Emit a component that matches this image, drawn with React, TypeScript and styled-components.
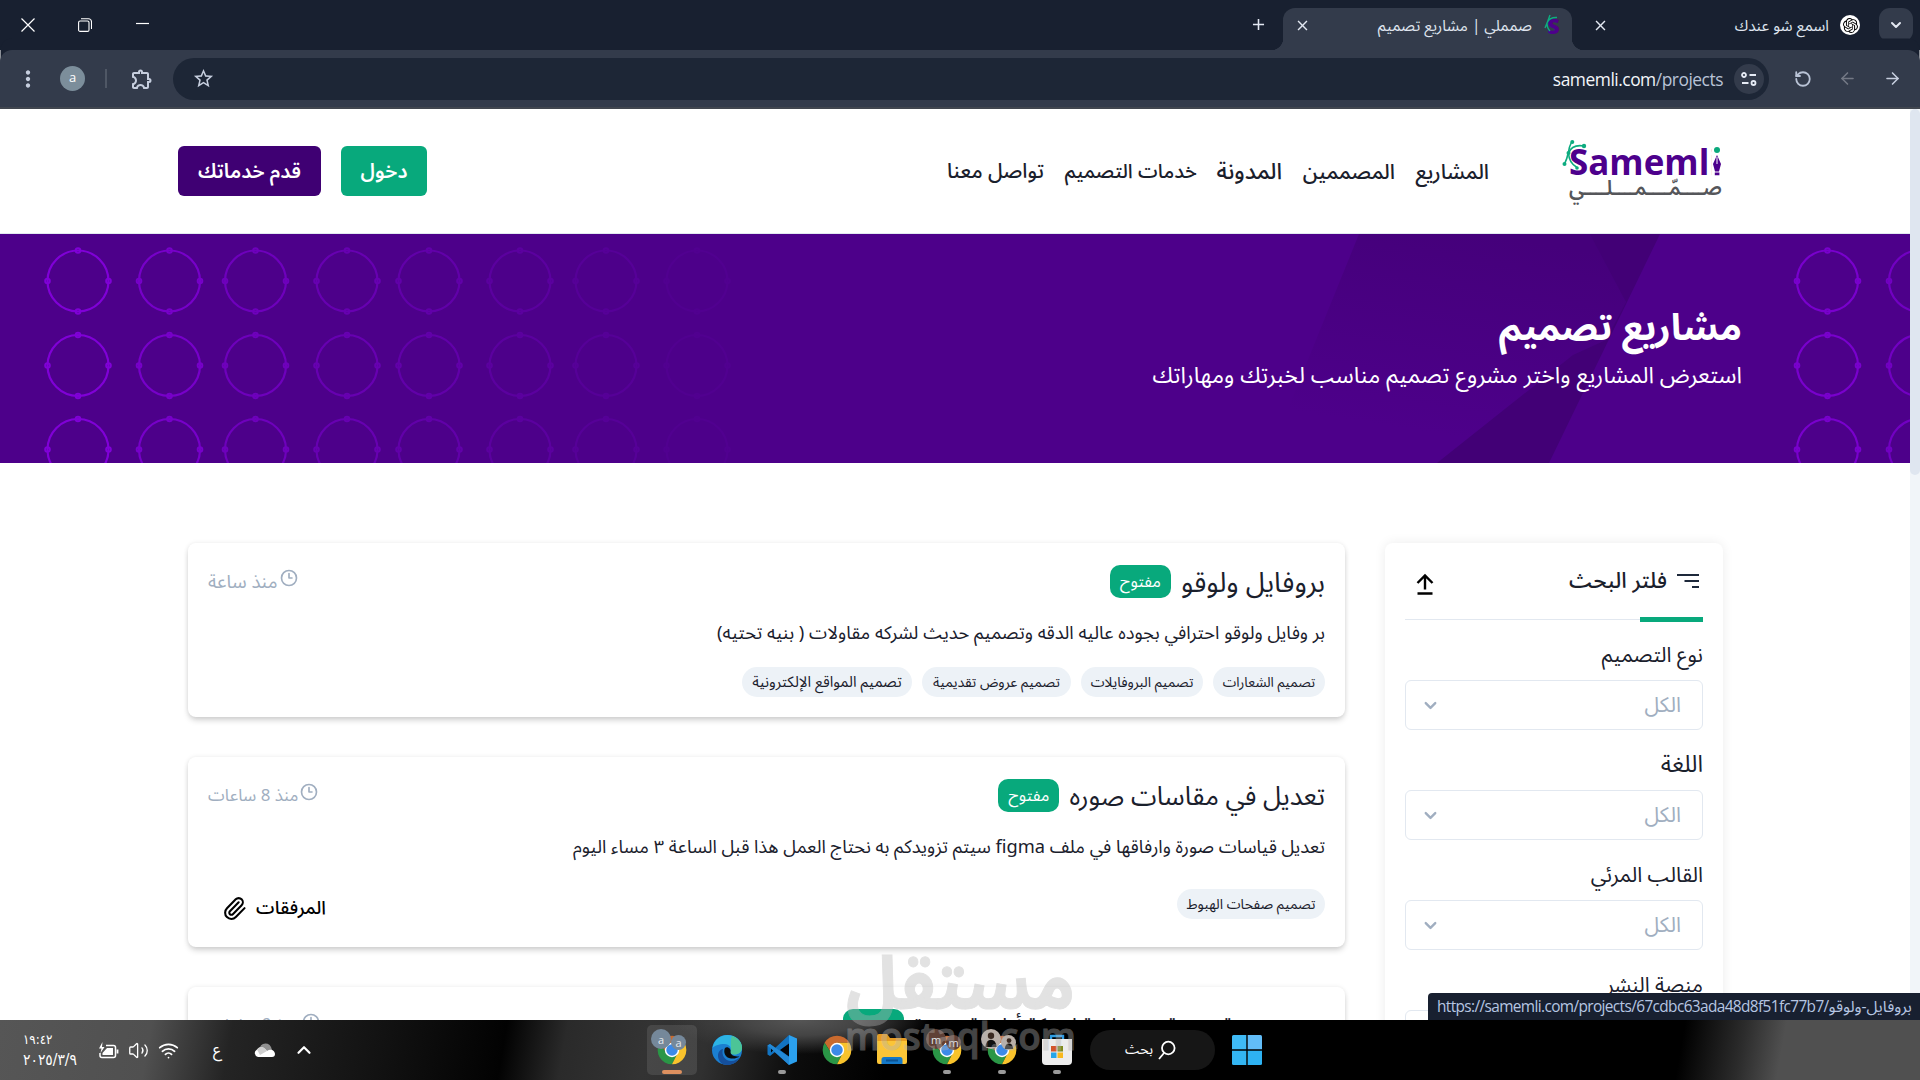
import type { ReactNode } from "react";
import styled, { createGlobalStyle } from "styled-components";
import { ArrowLeft, ArrowRight, ChevronDown, ChevronUp, Clock3, Paperclip, RotateCcw, Volume2, Wifi } from "lucide-react";
import { MdClose, MdAdd, MdOutlineExtension, MdStarBorder, MdMoreVert } from "react-icons/md";
import { SiOpenai } from "react-icons/si";

const filters = [
    { label: "نوع التصميم", size: 20.9 },
    { label: "اللغة", size: 23.4 },
    { label: "القالب المرئي", size: 21 },
    { label: "منصة النشر", size: 20.8 },
];

const navItems = [
    { label: "المشاريع", width: 74, size: 20.9 },
    { label: "المصممين", width: 93, size: 21 },
    { label: "المدونة", width: 65, size: 22.5 },
    { label: "خدمات التصميم", width: 133, size: 19.8 },
    { label: "تواصل معنا", width: 98, size: 20.6 },
];

type Project = {
    title: string;
    titleSize: number;
    time: string;
    timeSize: number;
    description: string;
    tags: { label: string; width: number; size: number }[];
    attachments?: boolean;
};

const projects: Project[] = [
    {
        title: "بروفايل ولوقو",
        titleSize: 27.5,
        time: "منذ ساعة",
        timeSize: 18.7,
        description: "بر وفايل ولوقو احترافي بجوده عاليه الدقه وتصميم حديث لشركه مقاولات ( بنيه تحتيه)",
        tags: [
            { label: "تصميم الشعارات", width: 112, size: 13.7 },
            { label: "تصميم البروفايلات", width: 122, size: 14 },
            { label: "تصميم عروض تقديمية", width: 149, size: 14.1 },
            { label: "تصميم المواقع الإلكترونية", width: 170, size: 15 },
        ],
    },
    {
        title: "تعديل في مقاسات صوره",
        titleSize: 26,
        time: "منذ 8 ساعات",
        timeSize: 16.9,
        description:
            "تعديل قياسات صورة وارفاقها في ملف figma سيتم تزويدكم به نحتاج العمل هذا قبل الساعة ٣ مساء اليوم",
        tags: [{ label: "تصميم صفحات الهبوط", width: 148, size: 14 }],
        attachments: true,
    },
    {
        title: "تصميم هوية بصرية من خلفية لشركة أطعمة جديدة",
        titleSize: 21.1,
        time: "منذ 9 ساعات",
        timeSize: 17.2,
        description: "",
        tags: [],
    },
];

export default function App() {
    return (
        <Screen>
            <GlobalStyle />
            <TitleBar />
            <Toolbar />
            <Viewport>
                <Site>
                    <SiteHeader />
                    <HeroSection />
                    <Content>
                        <FilterPanel />
                        <ProjectList>
                            {projects.map((project) => (
                                <ProjectCard key={project.title} project={project} />
                            ))}
                        </ProjectList>
                    </Content>
                </Site>
                <ScrollTrack>
                    <ScrollThumb />
                </ScrollTrack>
                <StatusBubble>
                    <span>https://samemli.com/projects/67cdbc63ada48d8f51fc77b7/</span>بروفايل-ولوقو
                </StatusBubble>
            </Viewport>
            <Taskbar />
            <Watermark />
        </Screen>
    );
}

function TitleBar() {
    return (
        <TabStrip>
            <TabSearch>
                <ChevronDown size={16} strokeWidth={3} />
            </TabSearch>
            <Tab $width={300}>
                <OpenAiBadge>
                    <SiOpenai size={15} />
                </OpenAiBadge>
                <TabTitle $size={15.3}>اسمع شو عندك</TabTitle>
                <TabClose />
            </Tab>
            <Tab $width={289} $active>
                <SFavicon />
                <TabTitle $size={15.4}>صمملي | مشاريع تصميم</TabTitle>
                <TabClose />
            </Tab>
            <NewTab size={19} />
            <WindowControls>
                <svg width="14" height="14" viewBox="0 0 14 14" stroke="#fff" strokeWidth="1.2">
                    <path d="M0.5 0.5 13.5 13.5M13.5 0.5 0.5 13.5" />
                </svg>
                <svg width="14" height="14" viewBox="0 0 14 14" stroke="#fff" strokeWidth="1.1" fill="none">
                    <rect x="0.6" y="3" width="10.4" height="10.4" rx="1.5" />
                    <path d="M3 0.8h7.5a3 3 0 0 1 3 3V11" />
                </svg>
                <svg width="14" height="14" viewBox="0 0 14 14" stroke="#fff" strokeWidth="1.2">
                    <path d="M1 5.500h13" />
                </svg>
            </WindowControls>
        </TabStrip>
    );
}

function Toolbar() {
    return (
        <ToolbarRow>
            <ArrowRight size={19} color="#c6cede" />
            <ArrowLeft size={19} color="#737884" />
            <RotateCcw size={18} color="#b9c3d6" strokeWidth={2.4} />
            <Omnibox>
                <SiteInfo>
                    <svg width="16" height="14" viewBox="0 0 16 14" fill="none" stroke="#e6ebf5" strokeWidth="1.8">
                        <circle cx="3" cy="3" r="2" />
                        <path d="M8.5 3H15M1 11h6.5" />
                        <circle cx="12.5" cy="11" r="2" />
                    </svg>
                </SiteInfo>
                <Url dir="ltr">
                    samemli.com<span>/projects</span>
                </Url>
                <MdStarBorder size={23} />
            </Omnibox>
            <Extension size={24} />
            <ToolbarDivider />
            <Avatar>a</Avatar>
            <MdMoreVert size={26} color="#c6cede" />
        </ToolbarRow>
    );
}

function SiteHeader() {
    return (
        <HeaderRow>
            <Logo />
            <Nav>
                {navItems.map((item) => (
                    <NavLink key={item.label} $width={item.width} $size={item.size}>
                        {item.label}
                    </NavLink>
                ))}
            </Nav>
            <HeaderButton $width={86} $color="#08a97c">
                دخول
            </HeaderButton>
            <HeaderButton $width={143} $color="#3f0073">
                قدم خدماتك
            </HeaderButton>
        </HeaderRow>
    );
}

function Logo() {
    return (
        <svg width="170" height="76" viewBox="0 0 170 76" direction="ltr">
            <text x="9" y="42" fontFamily="Open Sans" fontWeight="700" fontSize="36" fill="#4d008c" textLength="151" lengthAdjust="spacingAndGlyphs">
                Samemli
            </text>
            <rect x="151.5" y="12" width="11" height="32" fill="#fff" />
            <circle cx="157" cy="17" r="3" fill="#0aa97c" />
            <path d="M157 22l4 9-2 7.5h-4l-2-7.5zM154.8 39.5h4.6v2.8h-4.6z" fill="#4d008c" />
            <path d="M157 24v7" stroke="#fff" strokeWidth="1" />
            <g fill="none" stroke="#0eac80" strokeWidth="1.6">
                <path d="M12 8Q9 14 8.5 19Q7 26 4.5 31" />
                <path d="M8.5 20Q12 11 24 13" />
                <path d="M8.5 20Q9 30 17 34.5" />
            </g>
            <g fill="#0eac80">
                <circle cx="12.3" cy="9" r="2" />
                <circle cx="8.5" cy="20" r="2" />
                <circle cx="4.5" cy="31" r="2" />
                <circle cx="24" cy="13" r="2.2" />
                <circle cx="17" cy="35" r="1.8" />
            </g>
            <text x="162" y="62" direction="rtl" fontFamily="Noto Sans Arabic" fontWeight="600" fontSize="21" fill="#55565a" textLength="153" lengthAdjust="spacingAndGlyphs">
                صــــمّــــمــــلــــي
            </text>
        </svg>
    );
}

const ringColumns = [78, 169.5, 255.5, 347, 429, 520, 606, 697];
const ringOpacity = [0.9, 0.74, 0.58, 0.46, 0.36, 0.25, 0.16, 0.07];
const ringRows = [47, 131.5, 215.5];

function Ring({ cx, cy, opacity }: { cx: number; cy: number; opacity: number }) {
    return (
        <g opacity={opacity} fill="none" stroke="#8600e0">
            <circle cx={cx} cy={cy} r="30.5" strokeWidth="2.2" />
            <circle cx={cx} cy={cy - 30.5} r="2.3" strokeWidth="2" />
            <circle cx={cx} cy={cy + 30.5} r="2.3" strokeWidth="2" />
            <circle cx={cx - 30.5} cy={cy} r="2.3" strokeWidth="2" />
            <circle cx={cx + 30.5} cy={cy} r="2.3" strokeWidth="2" />
        </g>
    );
}

function HeroSection() {
    return (
        <Hero>
            <HeroArt viewBox="0 0 1910 229">
                <defs>
                    <linearGradient id="facet" x1="0.6" y1="0" x2="0.35" y2="1">
                        <stop offset="0" stopColor="#45007b" />
                        <stop offset="0.85" stopColor="#4d008a" />
                    </linearGradient>
                </defs>
                <path d="M1359 0H1600L1626 68 1607 106 1575 121 1437 229H1266z" fill="url(#facet)" />
                <path d="M1590 0H1660L1549 229H1437L1573 121 1606 106 1626 68z" fill="#420076" />
                {ringRows.map((cy) => (
                    <g key={cy}>
                        {ringColumns.map((cx, i) => (
                            <Ring key={cx} cx={cx} cy={cy} opacity={ringOpacity[i]} />
                        ))}
                        <Ring cx={1827.5} cy={cy} opacity={0.78} />
                        <Ring cx={1919.5} cy={cy} opacity={0.65} />
                    </g>
                ))}
            </HeroArt>
            <HeroTitle>مشاريع تصميم</HeroTitle>
            <HeroSubtitle>استعرض المشاريع واختر مشروع تصميم مناسب لخبرتك ومهاراتك</HeroSubtitle>
        </Hero>
    );
}

function FilterPanel() {
    return (
        <Panel>
            <PanelHead>
                <svg width="24" height="16" viewBox="0 0 24 16" stroke="#1e293b" strokeWidth="2">
                    <path d="M1 2h22M8.5 8H23M16 14h7" />
                </svg>
                <PanelTitle>فلتر البحث</PanelTitle>
                <svg width="18" height="22" viewBox="0 0 18 22" stroke="#000" strokeWidth="2.4" fill="none">
                    <path d="M9 16.5V2.5M1.5 10 9 2.5 16.5 10M1.5 20.5h15" />
                </svg>
            </PanelHead>
            <PanelRule />
            {filters.map((filter) => (
                <Field key={filter.label}>
                    <FieldLabel $size={filter.size}>{filter.label}</FieldLabel>
                    <Select>
                        الكل
                        <ChevronDown size={19} strokeWidth={3} />
                    </Select>
                </Field>
            ))}
        </Panel>
    );
}

function ProjectCard({ project }: { project: Project }) {
    return (
        <Card>
            <CardHead>
                <CardTitle $size={project.titleSize}>{project.title}</CardTitle>
                <Status>مفتوح</Status>
                <Time $size={project.timeSize}>
                    <Clock3 size={18} strokeWidth={2.2} />
                    {project.time}
                </Time>
            </CardHead>
            <Description $size={project.attachments ? 18.25 : 18.35}>{project.description}</Description>
            <CardFoot $tall={!!project.attachments}>
                {project.tags.map((tag) => (
                    <Tag key={tag.label} $width={tag.width} $size={tag.size}>
                        {tag.label}
                    </Tag>
                ))}
                {project.attachments && (
                    <Attachments>
                        المرفقات
                        <Paperclip size={25} />
                    </Attachments>
                )}
            </CardFoot>
        </Card>
    );
}

function ChromeIcon() {
    return (
        <svg width="30" height="30" viewBox="1 1 46 46">
            <path d="M4.95 13A22 22 0 0 1 43.05 13H24L15.34 29z" fill="#c96a2e" />
            <path d="M4.95 13A22 22 0 0 0 24 46L32.66 29H15.34z" fill="#2a9646" />
            <path d="M43.05 13A22 22 0 0 1 24 46L32.66 29 24 13z" fill="#f9c32c" />
            <circle cx="24" cy="24" r="11" fill="#fff" />
            <circle cx="24" cy="24" r="8.8" fill="#3c8ae8" />
        </svg>
    );
}

function EdgeIcon() {
    return (
        <svg width="30" height="30" viewBox="0 0 30 30">
            <circle cx="15" cy="15" r="15" fill="#1b7fd0" />
            <path d="M0.5 13C2 5 8 0 15.5 0 24 0 30 6 30 12.5c0 4.5-3.5 7-7.5 7-3 0-4.500-1-4-2.500 1.500-4-1-8-6-8C7 9 2 11 0.500 13z" fill="#2db4e4" />
            <path d="M20 1C26 3 30 7.500 30 12.500c0 4.500-3.500 7-7.500 7-3 0-4.500-1-4-2.500 1.500-5-1-12 1.500-16z" fill="#4cc497" />
            <path d="M11 14c-2 6 2 12 8 12 4 0 7-2 8.500-4C25 28 20 30 15 30 9 30 6 25 6 21c0-4 2-6.500 5-7z" fill="#154f9c" />
            <path d="M13 13c-2 4 0 10 6 10.500 4 .5 7-1 8.500-2-2 0-9 0-9-4.500 1-3-3-6-5.500-4z" fill="#0c0c0c" />
        </svg>
    );
}

function CodeIcon() {
    return (
        <svg width="30" height="30" viewBox="0 0 30 30">
            <path d="M22 0 8 13 3 9 0.5 10.5v9L3 21l5-4L22 30l1-8V8z" fill="#1273c0" />
            <path d="M4 12.5v5L6.5 15zM22 8.5 13 15l9 6.5z" fill="#050505" />
            <path d="M22 0l8 3.5v23L22 30z" fill="#2ba0ee" />
            <path d="M3 9 .5 10.5 22 30v-8z" fill="#2389d6" />
        </svg>
    );
}

function FolderIcon() {
    return (
        <svg width="30" height="34" viewBox="0 -3 30 34">
            <path d="M0 0a2 2 0 0 1 2-2h8l3 4h15a2 2 0 0 1 2 2v6H0z" fill="#e79c21" />
            <path d="M0 5h30v21a2 2 0 0 1-2 2H2a2 2 0 0 1-2-2z" fill="#fbc537" />
            <path d="M4.5 28v-4.5A2.5 2.5 0 0 1 7 21h16a2.5 2.5 0 0 1 2.5 2.5V28z" fill="#1478c8" />
            <path d="M9 24.5h12" stroke="#0c5392" strokeWidth="2" />
        </svg>
    );
}

function StoreIcon() {
    return (
        <svg width="30" height="32" viewBox="0 0 30 32">
            <path d="M9 6V2h12v4" fill="none" stroke="#2f9de4" strokeWidth="2.4" />
            <path d="M0 5h30v22a4 4 0 0 1-4 4H4a4 4 0 0 1-4-4z" fill="#ececec" />
            <path d="M9 12h5.5v5.5H9z" fill="#d2552a" />
            <path d="M15.5 12H21v5.5h-5.5z" fill="#7c8b1f" />
            <path d="M9 18.5h5.5V24H9z" fill="#26a5e8" />
            <path d="M15.5 18.5H21V24h-5.5z" fill="#f8b81c" />
        </svg>
    );
}

function TaskIcon({ children, running, active }: { children: ReactNode; running?: boolean; active?: boolean }) {
    return (
        <TaskItem $active={active}>
            {children}
            {(running || active) && <Indicator $active={active} />}
        </TaskItem>
    );
}

function Taskbar() {
    return (
        <TaskbarRow dir="ltr">
            <TrayClock>
                <TrayText $size={13.2}>١٩:٤٢</TrayText>
                <TrayText $size={15.4}>٢٠٢٥/٣/٩</TrayText>
            </TrayClock>
            <TrayIcons>
                <svg width="21" height="17" viewBox="0 0 21 17" fill="none" stroke="#fff" strokeWidth="1.5">
                    <path d="M8 3.5h7.5a2 2 0 0 1 2 2v8a2 2 0 0 1-2 2H4a2 2 0 0 1-2-2V11" />
                    <path d="M4.5 11v2H15V6H9z" fill="#fff" stroke="none" />
                    <path d="M4.5 0 1 6.5h2.5L2.5 11l4-6H4z" fill="#fff" stroke="none" />
                    <path d="M19.5 7.5v4" strokeWidth="1.8" />
                </svg>
                <Volume2 size={21} strokeWidth={1.5} />
                <Wifi size={21} strokeWidth={2} />
            </TrayIcons>
            <Lang>ع</Lang>
            <svg width="22" height="15" viewBox="0 0 22 15">
                <path d="M6 9a6 6 0 0 1 11-5l2 6z" fill="#8f8f8f" />
                <path d="M4 14a4 4 0 0 1-1-7.5C7 2 11 5 13 8c4-3 8 0 8 3a3 3 0 0 1-3 3z" fill="#fff" />
                <path d="M3 6.5C6 2 11 4 13 8l-7 4z" fill="#cfcfcf" />
            </svg>
            <TrayChevron size={22} strokeWidth={2.4} />
            <Apps>
                <TaskIcon active>
                    <ChromeIcon />
                    <ProfileDot $x={4} $y={4} $size={20} $color="#75889a">a</ProfileDot>
                    <ProfileDot $x={24} $y={10} $size={15} $color="#75889a">a</ProfileDot>
                </TaskIcon>
                <TaskIcon>
                    <EdgeIcon />
                </TaskIcon>
                <TaskIcon running>
                    <CodeIcon />
                </TaskIcon>
                <TaskIcon>
                    <ChromeIcon />
                </TaskIcon>
                <TaskIcon>
                    <FolderIcon />
                </TaskIcon>
                <TaskIcon running>
                    <ChromeIcon />
                    <ProfileDot $x={4} $y={4} $size={20} $color="#5f4036">m</ProfileDot>
                    <ProfileDot $x={24} $y={10} $size={15} $color="#5f4036">m</ProfileDot>
                </TaskIcon>
                <TaskIcon running>
                    <ChromeIcon />
                    <ProfileDot $x={4} $y={4} $size={20} $color="#b9afa8">
                        <Person />
                    </ProfileDot>
                    <ProfileDot $x={24} $y={10} $size={15} $color="#b9afa8">
                        <Person />
                    </ProfileDot>
                </TaskIcon>
                <TaskIcon running>
                    <StoreIcon />
                </TaskIcon>
            </Apps>
            <SearchPill>
                بحث
                <svg width="18" height="20" viewBox="0 0 18 20" fill="none" stroke="#fff" strokeWidth="1.8">
                    <circle cx="10.3" cy="8" r="6.3" />
                    <path d="M6 13 1 19" />
                </svg>
            </SearchPill>
            <svg width="30" height="30" viewBox="0 0 30 30">
                <path d="M0 1.5A1.5 1.5 0 0 1 1.5 0H14.3V14.3H0z" fill="#3fbaf5" />
                <path d="M15.7 0H28.5A1.5 1.5 0 0 1 30 1.5V14.3H15.7z" fill="#62bdf8" />
                <path d="M0 15.7H14.3V30H1.5A1.5 1.5 0 0 1 0 28.5z" fill="#33b5f2" />
                <path d="M15.7 15.7H30V28.5A1.5 1.5 0 0 1 28.5 30H15.7z" fill="#2eb2f2" />
            </svg>
        </TaskbarRow>
    );
}

function Person() {
    return (
        <svg width="80%" height="80%" viewBox="0 0 10 10">
            <circle cx="5" cy="3" r="2" fill="#3a2a22" />
            <path d="M1.5 10Q2 5.5 5 5.5T8.5 10z" fill="#111" />
        </svg>
    );
}

function Watermark() {
    return (
        <WatermarkArt viewBox="0 0 240 120">
            <text x="234" y="63" direction="rtl" fontFamily="Noto Sans Arabic" fontWeight="700" fontSize="74" textLength="229" lengthAdjust="spacingAndGlyphs">
                مستقل
            </text>
            <text x="4" y="104" direction="ltr" fontFamily="Open Sans" fontWeight="600" fontSize="38" textLength="231" lengthAdjust="spacingAndGlyphs">
                mostaql.com
            </text>
        </WatermarkArt>
    );
}

function SFavicon() {
    return (
        <svg width="17" height="22" viewBox="0 0 17 22">
            <text x="3.5" y="20" direction="ltr" fontFamily="Open Sans" fontWeight="800" fontSize="21" fill="#4d008c">
                S
            </text>
            <path d="M6 1Q4 7 1 14M3.5 8Q6 3 13 3.5M3 9Q3 14 6 17" fill="none" stroke="#0eac80" strokeWidth="1.4" />
        </svg>
    );
}

function TabClose() {
    return <MdClose size={17} color="#e3e8f2" />;
}

const GlobalStyle = createGlobalStyle`
    * {
        box-sizing: border-box;
    }

    body {
        margin: 0;
        background: #fff;
        overflow: hidden;
    }
`;

const Screen = styled.div`
    position: relative;
    display: flex;
    flex-direction: column;
    width: 1920px;
    height: 1080px;
    overflow: hidden;
    direction: rtl;
    font-family: "Noto Sans Arabic", "Open Sans", sans-serif;
    color: #1a202c;

    svg {
        flex-shrink: 0;
    }
`;

const TabStrip = styled.div`
    display: flex;
    align-items: flex-end;
    height: 50px;
    padding-right: 7px;
    background: #182030;
`;

const TabSearch = styled.div`
    display: flex;
    align-items: center;
    justify-content: center;
    width: 34px;
    height: 34px;
    margin-bottom: 8px;
    border-radius: 11px;
    background: #333b4b;
    color: #e3e8f2;
`;

const Tab = styled.div<{ $width: number; $active?: boolean }>`
    position: relative;
    display: flex;
    align-items: center;
    gap: ${(p) => (p.$active ? 12 : 11)}px;
    width: ${(p) => p.$width}px;
    height: 42px;
    margin-right: ${(p) => (p.$active ? 0 : 7)}px;
    padding: ${(p) => (p.$active ? "0 11px 8px" : "0 12px 8px 0")};
    padding-left: ${(p) => (p.$active ? 11 : 20)}px;
    border-radius: 12px 12px 0 0;
    background: ${(p) => (p.$active ? "#333b4b" : "transparent")};

    > :last-child {
        margin-right: auto;
    }

    &::before,
    &::after {
        content: "";
        position: absolute;
        bottom: 0;
        width: 12px;
        height: 12px;
        display: ${(p) => (p.$active ? "block" : "none")};
    }

    &::before {
        right: -12px;
        background: radial-gradient(circle at 100% 0, transparent 12px, #333b4b 12.5px);
    }

    &::after {
        left: -12px;
        background: radial-gradient(circle at 0 0, transparent 12px, #333b4b 12.5px);
    }
`;

const OpenAiBadge = styled.div`
    display: flex;
    align-items: center;
    justify-content: center;
    width: 20px;
    height: 20px;
    border-radius: 50%;
    background: #fff;
    color: #000;
`;

const TabTitle = styled.span<{ $size: number }>`
    margin-top: 2px;
    font-size: ${(p) => p.$size}px;
    line-height: 30px;
    white-space: nowrap;
    color: #dfe4ee;
`;

const NewTab = styled(MdAdd)`
    margin: 0 15px 16px 0;
    color: #e3e8f2;
`;

const WindowControls = styled.div`
    direction: ltr;
    display: flex;
    gap: 43px;
    margin: 0 auto 18px 0;
    padding-left: 21px;
`;

const ToolbarRow = styled.div`
    display: flex;
    align-items: center;
    height: 59px;
    padding: 0 18px 0 15px;
    border-radius: 12px 12px 0 0;
    border-bottom: 2px solid #41464f;
    background: #333b4b;
    box-shadow: 0 -12px 0 -0.5px #182030;

    > svg + svg {
        margin-right: 26px;
    }
`;

const Omnibox = styled.div`
    display: flex;
    align-items: center;
    flex: 1;
    height: 42px;
    margin: 0 25px 0 19px;
    padding: 0 5px 0 19px;
    border-radius: 21px;
    background: #1d2636;
    color: #c6cede;
`;

const SiteInfo = styled.div`
    display: flex;
    align-items: center;
    justify-content: center;
    width: 30px;
    height: 30px;
    border-radius: 50%;
    background: #333b4b;
`;

const Url = styled.span`
    margin: 0 11px 0 auto;
    font: 17.4px "Open Sans", sans-serif;
    letter-spacing: -0.48px;
    color: #f4f6fa;

    span {
        color: #b9c3d6;
    }
`;

const Extension = styled(MdOutlineExtension)`
    color: #c6cede;
`;

const ToolbarDivider = styled.div`
    width: 2px;
    height: 19px;
    margin: 0 23px 0 20px;
    background: #4f5765;
`;

const Avatar = styled.div`
    width: 25px;
    height: 25px;
    margin-left: 19px;
    border-radius: 50%;
    background: #7c8e9b;
    color: #fff;
    font: 13px/23px "Open Sans", sans-serif;
    text-align: center;
`;

const Viewport = styled.div`
    position: relative;
    display: flex;
    flex: 1;
    min-height: 0;
    direction: ltr;
    overflow: hidden;
`;

const Site = styled.div`
    direction: rtl;
    width: 1910px;
    background: #fff;
`;

const ScrollTrack = styled.div`
    width: 10px;
    background: #f1f5f9;
`;

const ScrollThumb = styled.div`
    height: 366px;
    border-radius: 5px;
    background: #dfe6f0;
`;

const StatusBubble = styled.div`
    position: absolute;
    left: 1428px;
    bottom: 0;
    width: 492px;
    height: 27px;
    padding-left: 9px;
    border-radius: 4px 0 0 0;
    background: #182030;
    color: #b6c6e2;
    font: 15.7px/27px "Open Sans", "Noto Sans Arabic", sans-serif;
    white-space: nowrap;

    span {
        font-size: 15.4px;
        letter-spacing: -0.62px;
    }
`;

const HeaderRow = styled.header`
    display: flex;
    align-items: center;
    height: 125px;
    padding: 0 180px 0 178px;
    border-bottom: 1px solid #e2e8f0;
`;

const Nav = styled.nav`
    display: flex;
    gap: 20px;
    margin: 1px 71px 0 auto;
`;

const NavLink = styled.a<{ $width: number; $size: number }>`
    width: ${(p) => p.$width}px;
    font-size: ${(p) => p.$size}px;
    font-weight: 500;
    line-height: 36px;
    white-space: nowrap;
`;

const HeaderButton = styled.button<{ $width: number; $color: string }>`
    width: ${(p) => p.$width}px;
    height: 50px;
    margin-right: 20px;
    padding: 2px 0 0;
    border: none;
    border-radius: 6px;
    background: ${(p) => p.$color};
    color: #fff;
    font: 600 20px/36px "Noto Sans Arabic", sans-serif;
    white-space: nowrap;
`;

const Hero = styled.section`
    position: relative;
    height: 229px;
    padding: 66px 168px 0 0;
    background: #4d008a;
    color: #fff;
`;

const HeroArt = styled.svg`
    position: absolute;
    inset: 0;
    width: 1910px;
    height: 229px;
`;

const HeroTitle = styled.h1`
    position: relative;
    margin: 0;
    font-size: 37.2px;
    font-weight: 700;
    line-height: 56px;
`;

const HeroSubtitle = styled.p`
    position: relative;
    margin: 2px 0 0;
    font-size: 22.9px;
    line-height: 36px;
`;

const Content = styled.main`
    display: flex;
    align-items: flex-start;
    gap: 40px;
    padding: 80px 187px 0 188px;
`;

const Panel = styled.aside`
    width: 338px;
    height: 560px;
    padding: 0 20px;
    border-radius: 8px;
    box-shadow: 0 0 12px rgba(0, 0, 0, 0.08);
`;

const PanelHead = styled.div`
    display: flex;
    align-items: center;
    height: 76px;
    padding: 0 3px 0 11px;

    > :last-child {
        margin-right: auto;
        margin-top: 6px;
    }
`;

const PanelTitle = styled.h2`
    margin: 0 9px 0 0;
    font-size: 22px;
    font-weight: 500;
    line-height: 40px;
`;

const PanelRule = styled.div`
    height: 5px;
    margin-bottom: 18px;
    margin-top: -2px;
    background:
        linear-gradient(#08a97c, #08a97c) right / 63px 5px no-repeat,
        linear-gradient(#e2e8f0, #e2e8f0) center / 100% 1px no-repeat;
`;

const Field = styled.div`
    height: 110px;
`;

const FieldLabel = styled.div<{ $size: number }>`
    height: 40px;
    font-size: ${(p) => p.$size}px;
    line-height: 30px;
`;

const Select = styled.div`
    display: flex;
    align-items: center;
    justify-content: space-between;
    height: 50px;
    padding: 0 21px 0 15px;
    border: 1px solid #e2e8f0;
    border-radius: 6px;
    color: #a0aec0;
    font-size: 21px;
    line-height: 30px;
`;

const ProjectList = styled.div`
    display: flex;
    flex: 1;
    flex-direction: column;
    gap: 40px;
`;

const Card = styled.article`
    padding: 22px 20px 20px;
    border-radius: 8px;
    box-shadow:
        0 4px 6px -1px rgba(0, 0, 0, 0.18),
        0 0 5px rgba(0, 0, 0, 0.08);
`;

const CardHead = styled.div`
    display: flex;
    align-items: center;
    height: 33px;
`;

const CardTitle = styled.h3<{ $size: number }>`
    margin: 2px 0 0 10px;
    font-size: ${(p) => p.$size}px;
    font-weight: 400;
    line-height: 40px;
    white-space: nowrap;
`;

const Status = styled.span`
    width: 61px;
    height: 33px;
    border-radius: 10px;
    background: #08a97c;
    color: #fff;
    font-size: 16.4px;
    line-height: 33px;
    text-align: center;
`;

const Time = styled.span<{ $size: number }>`
    display: flex;
    gap: 2px;
    margin-right: auto;
    color: #a0aec0;
    font-size: ${(p) => p.$size}px;
    line-height: 34px;

    svg {
        margin-top: 4px;
    }
`;

const Description = styled.p<{ $size: number }>`
    height: 32px;
    margin: 19px 0 0;
    font-size: ${(p) => p.$size}px;
    line-height: 33px;
    white-space: nowrap;
`;

const CardFoot = styled.div<{ $tall: boolean }>`
    display: flex;
    gap: 10px;
    height: ${(p) => (p.$tall ? 38 : 30)}px;
    margin-top: ${(p) => (p.$tall ? 26 : 18)}px;
`;

const Tag = styled.span<{ $width: number; $size: number }>`
    width: ${(p) => p.$width}px;
    height: 30px;
    border-radius: 15px;
    background: #edf2f7;
    font-size: ${(p) => p.$size}px;
    line-height: 31px;
    text-align: center;
    white-space: nowrap;
`;

const Attachments = styled.span`
    display: flex;
    align-items: center;
    gap: 9px;
    margin: 0 auto 0 14px;
    color: #000;
    font-size: 18.6px;
    font-weight: 500;
`;

const TaskbarRow = styled.footer`
    direction: ltr;
    display: flex;
    align-items: center;
    height: 60px;
    padding-left: 23px;
    background:
        radial-gradient(ellipse 130px 34px at 800px 0, #555 0, #444 45%, transparent 100%),
        linear-gradient(
            100deg,
            #565656 0,
            #505050 150px,
            #242424 230px,
            #121212 380px,
            #020202 500px,
            #2a2a2a 560px,
            #333 640px,
            #303030 700px,
            #0c0c0c 790px,
            #000 880px,
            #000 1660px,
            #2c2c2c 1720px,
            #505050 1760px
        );
    color: #fff;
`;

const TrayClock = styled.div`
    display: flex;
    flex-direction: column;
    width: 75px;
    font-family: "DejaVu Sans Condensed", sans-serif;
`;

const TrayText = styled.span<{ $size: number }>`
    font-size: ${(p) => p.$size}px;
    line-height: 20px;
    white-space: nowrap;
`;

const TrayIcons = styled.div`
    display: flex;
    align-items: center;
    gap: 9px;
`;

const Lang = styled.span`
    width: 12px;
    margin: 0 29px 0 34px;
    font-size: 16px;
    line-height: 30px;
`;

const TrayChevron = styled(ChevronUp)`
    margin-left: 17px;
`;

const Apps = styled.div`
    display: flex;
    gap: 5px;
    margin-left: 332px;
`;

const TaskItem = styled.div<{ $active?: boolean }>`
    position: relative;
    display: flex;
    align-items: center;
    justify-content: center;
    width: 50px;
    height: 50px;
    border-radius: 5px;
    background: ${(p) => (p.$active ? "rgba(255, 255, 255, 0.1)" : "transparent")};
`;

const Indicator = styled.i<{ $active?: boolean }>`
    position: absolute;
    bottom: 1px;
    width: ${(p) => (p.$active ? 20 : 8)}px;
    height: 4px;
    border-radius: 2px;
    background: ${(p) => (p.$active ? "#dd905f" : "#9a9a9a")};
`;

const ProfileDot = styled.span<{ $x: number; $y: number; $size: number; $color: string }>`
    position: absolute;
    left: ${(p) => p.$x}px;
    top: ${(p) => p.$y}px;
    display: flex;
    align-items: center;
    justify-content: center;
    width: ${(p) => p.$size}px;
    height: ${(p) => p.$size}px;
    border-radius: 50%;
    background: ${(p) => p.$color};
    color: #e5e9ee;
    font: 11px/1 "Open Sans", sans-serif;
`;

const SearchPill = styled.div`
    display: flex;
    align-items: center;
    gap: 5px;
    width: 125px;
    height: 40px;
    margin: 0 17px 0 8px;
    padding-left: 35px;
    border-radius: 20px;
    background: #161616;
    font-size: 14px;
    line-height: 30px;
`;

const WatermarkArt = styled.svg`
    position: absolute;
    left: 841px;
    top: 946px;
    width: 240px;
    height: 120px;
    fill: #b4b4b4;
    stroke: #b4b4b4;
    stroke-width: 1px;
    opacity: 0.38;
    pointer-events: none;
`;
